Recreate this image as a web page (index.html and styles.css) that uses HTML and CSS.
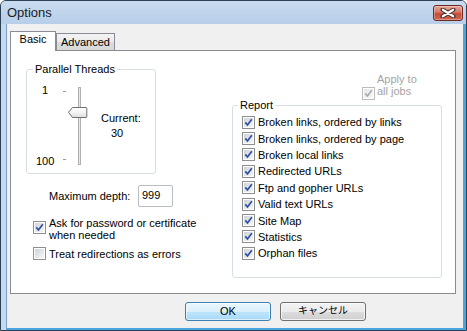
FILE: index.html
```html
<!DOCTYPE html>
<html lang="ja">
<head>
<meta charset="utf-8">
<title>Options</title>
<link rel="stylesheet" href="styles.css">
</head>
<body>
<svg class="defs" width="0" height="0" aria-hidden="true">
  <defs>
    <linearGradient id="cbfill" x1="0" y1="0" x2="1" y2="1">
      <stop offset="0" stop-color="#cfd3d8"/>
      <stop offset="1" stop-color="#f7f7f7"/>
    </linearGradient>
    <linearGradient id="cbdis" x1="0" y1="0" x2="1" y2="1">
      <stop offset="0" stop-color="#e6e6e6"/>
      <stop offset="1" stop-color="#f8f8f8"/>
    </linearGradient>
    <linearGradient id="thumb" x1="0" y1="0" x2="0" y2="1">
      <stop offset="0" stop-color="#ffffff"/>
      <stop offset="0.5" stop-color="#f4f4f4"/>
      <stop offset="1" stop-color="#dcdcdc"/>
    </linearGradient>
    <symbol id="cb-on" viewBox="0 0 13 13">
      <rect x="0.5" y="0.5" width="12" height="12" fill="#fff" stroke="#8e8f8f"/>
      <rect x="2" y="2" width="9" height="9" fill="url(#cbfill)"/>
      <path d="M3.3 6.4 L5.5 9 L9.8 3.3" fill="none" stroke="#2c4ea6" stroke-width="1.7"/>
    </symbol>
    <symbol id="cb-off" viewBox="0 0 13 13">
      <rect x="0.5" y="0.5" width="12" height="12" fill="#fff" stroke="#8e8f8f"/>
      <rect x="2" y="2" width="9" height="9" fill="url(#cbfill)"/>
    </symbol>
    <symbol id="cb-dis" viewBox="0 0 13 13">
      <rect x="0.5" y="0.5" width="12" height="12" fill="#fff" stroke="#bcbcbc"/>
      <rect x="2" y="2" width="9" height="9" fill="url(#cbdis)"/>
      <path d="M3.3 6.4 L5.5 9 L9.8 3.3" fill="none" stroke="#a8a8a8" stroke-width="1.6"/>
    </symbol>
  </defs>
</svg>
<div class="window">
  <div class="titlebar">
    <span class="title">Options</span>
    <div class="close">
      <svg width="16" height="10" viewBox="0 0 16 10">
        <path d="M2.5 1.5 L13.5 8.5 M13.5 1.5 L2.5 8.5" stroke="#3b2a28" stroke-width="4" stroke-linecap="round"/>
        <path d="M2.8 1.7 L13.2 8.3 M13.2 1.7 L2.8 8.3" stroke="#ffffff" stroke-width="2.2" stroke-linecap="round"/>
      </svg>
    </div>
  </div>
  <div class="client">
    <div class="tabs">
      <div class="tab active">Basic</div>
      <div class="tab inactive">Advanced</div>
    </div>
    <div class="panel">
      <div class="col-left">
        <fieldset class="group threads">
          <legend>Parallel Threads</legend>
          <div class="slider-row">
            <div class="scale"><span>1</span><span>100</span></div>
            <svg class="slider" width="34" height="84" viewBox="0 0 34 84">
              <line x1="5" y1="7.5" x2="8" y2="7.5" stroke="#9a9a9a"/>
              <line x1="5" y1="75.5" x2="8" y2="75.5" stroke="#9a9a9a"/>
              <rect x="20.5" y="3.5" width="2" height="77" fill="#e8e8e8" stroke="#b0b0b0"/>
              <path d="M10.5 28.3 L14.5 23.5 H28 Q28.8 23.5 28.8 24.3 V32.7 Q28.8 33.5 28 33.5 H14.5 Z" fill="url(#thumb)" stroke="#707070"/>
            </svg>
            <div class="current"><div>Current:</div><div class="cur-val">30</div></div>
          </div>
        </fieldset>
        <div class="depth-row">
          <span class="depth-label">Maximum depth:</span>
          <input class="depth" type="text" value="999">
        </div>
        <div class="check ask">
          <svg class="cb" width="13" height="13"><use href="#cb-on"/></svg>
          <span>Ask for password or certificate<br>when needed</span>
        </div>
        <div class="check treat">
          <svg class="cb" width="13" height="13"><use href="#cb-off"/></svg>
          <span>Treat redirections as errors</span>
        </div>
      </div>
      <div class="col-right">
        <div class="apply">
          <svg class="cb" width="13" height="13"><use href="#cb-dis"/></svg>
          <span>Apply to<br>all jobs</span>
        </div>
        <fieldset class="group report">
          <legend>Report</legend>
          <div class="report-list">
            <div class="item"><svg class="cb" width="13" height="13"><use href="#cb-on"/></svg><span>Broken links, ordered by links</span></div>
            <div class="item"><svg class="cb" width="13" height="13"><use href="#cb-on"/></svg><span>Broken links, ordered by page</span></div>
            <div class="item"><svg class="cb" width="13" height="13"><use href="#cb-on"/></svg><span>Broken local links</span></div>
            <div class="item"><svg class="cb" width="13" height="13"><use href="#cb-on"/></svg><span>Redirected URLs</span></div>
            <div class="item"><svg class="cb" width="13" height="13"><use href="#cb-on"/></svg><span>Ftp and gopher URLs</span></div>
            <div class="item"><svg class="cb" width="13" height="13"><use href="#cb-on"/></svg><span>Valid text URLs</span></div>
            <div class="item"><svg class="cb" width="13" height="13"><use href="#cb-on"/></svg><span>Site Map</span></div>
            <div class="item"><svg class="cb" width="13" height="13"><use href="#cb-on"/></svg><span>Statistics</span></div>
            <div class="item"><svg class="cb" width="13" height="13"><use href="#cb-on"/></svg><span>Orphan files</span></div>
          </div>
        </fieldset>
      </div>
    </div>
    <div class="buttons">
      <div class="btn default">OK</div>
      <div class="btn">キャンセル</div>
    </div>
  </div>
</div>
</body>
</html>
```
FILE: styles.css
```css
* { box-sizing: border-box; }
html, body { margin: 0; padding: 0; }
body {
  width: 467px;
  height: 331px;
  overflow: hidden;
  background: #ffffff;
  font-family: "Liberation Sans", Arial, "Noto Sans CJK JP", sans-serif;
  font-size: 11px;
  color: #000;
}
.defs { display: block; width: 0; height: 0; }

.window {
  width: 467px;
  height: 331px;
  border: 1px solid #2c3f55;
  border-radius: 6px 6px 0 0;
  background: #c6daef;
  display: flex;
  flex-direction: column;
  overflow: hidden;
}
.titlebar {
  height: 23px;
  flex: none;
  display: flex;
  align-items: center;
  justify-content: space-between;
  padding: 0 3px 0 6px;
  background: linear-gradient(#c9dbef, #b7cfe9);
}
.title { font-size: 13px; line-height: 16px; color: #1a1a1a; }
.close {
  width: 30px;
  height: 16px;
  border: 1px solid #6e2a20;
  border-radius: 3px;
  background: linear-gradient(#e8a797, #d57766 45%, #c44b37 55%, #d06a52);
  box-shadow: inset 0 0 0 1px rgba(255, 255, 255, 0.3);
  display: flex;
  align-items: center;
  justify-content: center;
}
.close svg { display: block; }

.client {
  flex: 1;
  margin-left: 5px;
  border-left: 1px solid #7aa0c8;
  border-right: 3px solid #48a6df;
  border-bottom: 2px solid #48a6df;
  background: #f0f0f0;
  padding: 7px 7px 0 3px;
  display: flex;
  flex-direction: column;
}

.tabs {
  display: flex;
  align-items: flex-end;
  height: 20px;
  flex: none;
  margin-bottom: -1px;
}
.tab {
  border: 1px solid #898c95;
  border-bottom: 0;
  text-align: center;
  line-height: 13px;
}
.tab.active {
  width: 46px;
  height: 20px;
  padding-top: 1px;
  background: #ffffff;
  position: relative;
  z-index: 1;
}
.tab.inactive {
  width: 59px;
  height: 17px;
  margin-bottom: 1px;
  padding-top: 2px;
  border-left: 0;
  margin-left: 0;
  border-left: 1px solid #898c95;
  background: linear-gradient(#f3f3f3, #ebebeb 50%, #dddddd 50%, #d9d9d9);
}

.panel {
  height: 244px;
  flex: none;
  background: #ffffff;
  border: 1px solid #898c95;
  display: grid;
  grid-template-columns: 200px 210px;
  column-gap: 6px;
  align-items: start;
  padding: 0 0 0 15px;
}

.group {
  margin: 0;
  padding: 0;
  min-width: 0;
  border: 1px solid #d5dfe5;
  border-radius: 3px;
}
.group legend { padding: 0 2px; line-height: 13px; }

.threads { width: 130px; height: 111px; margin-top: 12px; }
.threads legend { margin-left: 6px; }
.slider-row { display: flex; margin-top: 8px; }
.scale {
  margin-left: 9px;
  width: 18px;
  height: 84px;
  display: flex;
  flex-direction: column;
  justify-content: space-between;
  text-align: center;
  line-height: 13px;
}
.slider { display: block; margin-left: 4px; flex: none; }
.current { margin-left: 9px; margin-top: 26.5px; line-height: 15px; }
.cur-val { padding-left: 10px; }

.depth-row {
  display: flex;
  align-items: center;
  margin-top: 11px;
  padding-left: 23px;
}
.depth-label { flex: none; width: 89px; }
.depth {
  width: 35px;
  height: 22px;
  margin: 0;
  border: 1px solid #b8bcc4;
  border-radius: 2px;
  padding: 0 3px 2px;
  font: inherit;
  color: #000;
  background: #fff;
  outline: none;
}

.check {
  display: flex;
  align-items: flex-start;
  gap: 3px;
  padding-left: 7px;
  line-height: 12px;
}
.cb { display: block; flex: none; }
.ask { margin-top: 10px; }
.ask .cb { margin-top: 4px; }
.treat { margin-top: 7px; }
.treat .cb { margin-top: -1px; }

.apply {
  display: flex;
  align-items: flex-start;
  gap: 2px;
  margin-top: 22px;
  padding-left: 130px;
  line-height: 12px;
  color: #a3a3a3;
}
.apply .cb { margin-top: 14px; margin-bottom: -1px; }

.report { height: 179px; }
.report legend { margin-left: 5px; }
.report-list { padding: 2px 0 0 9px; }
.item {
  height: 16.4px;
  display: flex;
  align-items: center;
  gap: 3px;
}

.buttons {
  display: flex;
  gap: 9px;
  padding-left: 175px;
  margin-top: 8px;
}
.btn {
  width: 86px;
  height: 19px;
  border: 1px solid #707070;
  border-radius: 3px;
  background: linear-gradient(#f2f2f2, #ebebeb 50%, #dddddd 50%, #cfcfcf);
  box-shadow: inset 0 0 0 1px rgba(255, 255, 255, 0.7);
  text-align: center;
  line-height: 16px;
  font-size: 11px;
}
.btn.default {
  border-color: #3c7fb1;
  background: linear-gradient(#eaf6fd, #d9f0fc 50%, #bee6fd 50%, #a7d9f5);
  box-shadow: inset 0 0 0 1px rgba(255, 255, 255, 0.6), 0 0 0 0 transparent;
}
.btn:not(.default) { font-size: 10px; }
```
